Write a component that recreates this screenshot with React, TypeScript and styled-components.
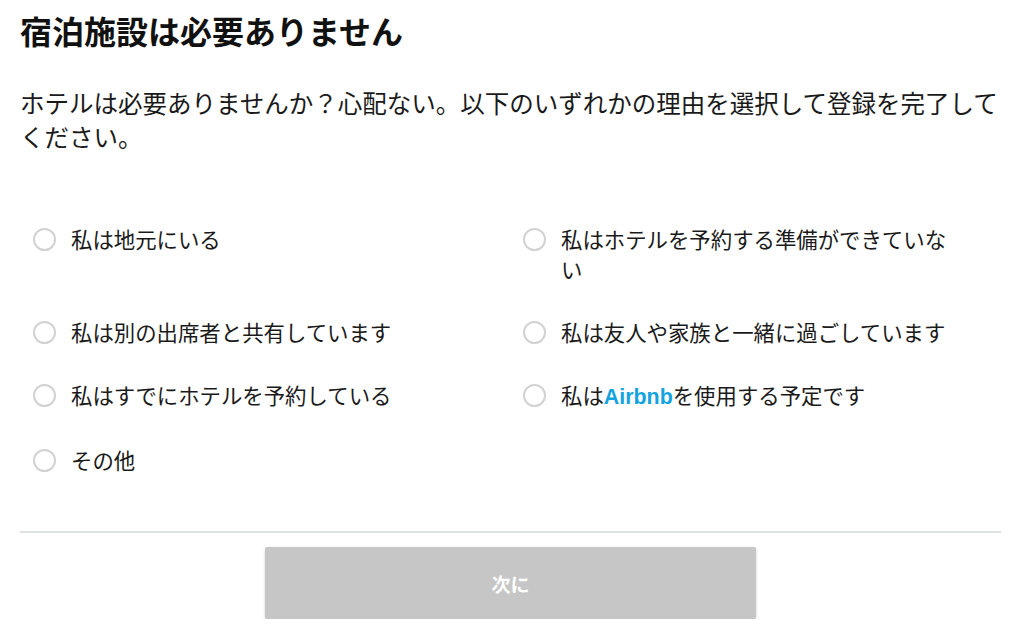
import React from "react";
import styled, { createGlobalStyle } from "styled-components";

const GlobalStyle = createGlobalStyle`
  html, body { margin: 0; padding: 0; background: #ffffff; }
  body {
    font-family: "Noto Sans CJK JP", "Noto Sans", sans-serif;
    color: #1a1a1a;
  }
`;

const Page = styled.div`
  width: 981px;
  padding: 10px 0 0 20px;
`;

const Title = styled.h1`
  margin: 0;
  font-size: 32px;
  line-height: 40px;
  font-weight: 700;
  color: #111;
`;

const Lead = styled.p`
  margin: 36px 0 0;
  font-size: 24.5px;
  line-height: 34px;
  font-weight: 400;
  color: #1a1a1a;
`;

const Options = styled.div`
  margin-top: 70px;
  display: grid;
  grid-template-columns: 490px 491px;
  row-gap: 33px;
`;

const Option = styled.label`
  display: flex;
  align-items: flex-start;
  gap: 15px;
  padding: 0 50px 0 13px;
  font-size: 21.4px;
  line-height: 30px;
  color: #1a1a1a;
  cursor: pointer;
`;

const Radio = styled.span`
  flex: 0 0 auto;
  box-sizing: border-box;
  width: 23px;
  height: 23px;
  margin-top: 4px;
  border: 2px solid #d2d2d2;
  border-radius: 50%;
  background: #fff;
`;

const Brand = styled.span`
  color: #12a3e0;
  font-family: "Liberation Sans", "Noto Sans", sans-serif;
  font-weight: 700;
`;

const Divider = styled.hr`
  margin: 56px 0 0;
  border: 0;
  height: 2px;
  background: #dde2e1;
`;

const Footer = styled.div`
  display: flex;
  justify-content: center;
  padding-top: 14px;
`;

const NextButton = styled.button`
  width: 491px;
  height: 72px;
  border: 0;
  border-radius: 2px;
  background: #c6c6c6;
  color: #ffffff;
  font-family: "Noto Sans CJK JP", sans-serif;
  font-size: 19px;
  font-weight: 700;
  box-shadow: 0 1px 3px rgba(0, 0, 0, 0.18);
  cursor: default;
`;

const options: React.ReactNode[] = [
  "私は地元にいる",
  "私はホテルを予約する準備ができていない",
  "私は別の出席者と共有しています",
  "私は友人や家族と一緒に過ごしています",
  "私はすでにホテルを予約している",
  <>
    私は<Brand>Airbnb</Brand>を使用する予定です
  </>,
  "その他",
];

export default function App() {
  return (
    <>
      <GlobalStyle />
      <Page>
        <Title>宿泊施設は必要ありません</Title>
        <Lead>
          ホテルは必要ありませんか？心配ない。以下のいずれかの理由を選択して登録を完了してください。
        </Lead>
        <Options>
          {options.map((o, i) => (
            <Option key={i}>
              <Radio />
              <span>{o}</span>
            </Option>
          ))}
        </Options>
        <Divider />
        <Footer>
          <NextButton type="button">次に</NextButton>
        </Footer>
      </Page>
    </>
  );
}
